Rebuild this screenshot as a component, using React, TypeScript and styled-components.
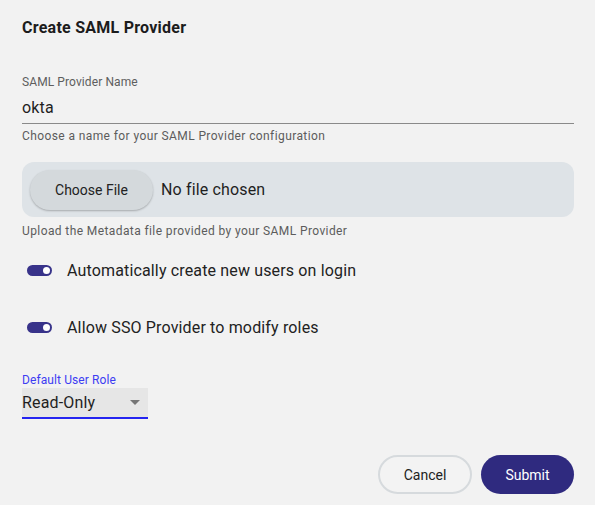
import styled, { createGlobalStyle } from "styled-components";

const GlobalStyle = createGlobalStyle`
    html, body {
        margin: 0;
        padding: 0;
        background: #f2f2f2;
        font-family: Roboto, "Liberation Sans", sans-serif;
        color: #1f1f1f;
    }`

const Page = styled.div`
    width: 595px;
    height: 505px;
    box-sizing: border-box;
    padding: 18px 21px 0 22px;
    display: flex;
    flex-direction: column;`

const Title = styled.h2`
    margin: 0;
    font-size: 16px;
    font-weight: 700;
    line-height: 20px;
    letter-spacing: 0.25px;
    color: #1c1c1c;`

const Field = styled.div`
    margin-top: 37px;
    display: flex;
    flex-direction: column;`

const Label = styled.label<{ $focused?: boolean }>`
    font-size: 12px;
    line-height: 14px;
    letter-spacing: 0.1px;
    color: ${p => p.$focused ? "#3d3df2" : "#5e5e5e"};`

const Input = styled.input`
    margin-top: 9px;
    padding: 0 0 5px;
    border: 0;
    border-bottom: 1px solid #8a8a8a;
    background: transparent;
    font-family: inherit;
    font-size: 16px;
    line-height: 20px;
    letter-spacing: 0.15px;
    color: #1f1f1f;
    outline: none;`

const Helper = styled.p<{ $gap?: number }>`
    margin: ${p => p.$gap ?? 5}px 0 0;
    font-size: 12px;
    line-height: 14px;
    letter-spacing: 0.4px;
    color: #5c5c5c;`

const FileBox = styled.div`
    margin-top: 19px;
    height: 55px;
    border-radius: 12px;
    background: #dee3e7;
    display: flex;
    align-items: center;
    padding: 0 8px;
    gap: 8px;`

const FileButton = styled.button`
    width: 123px;
    height: 40px;
    border: 0;
    border-radius: 20px;
    background: #d4d9dc;
    box-shadow: 0 1px 2px rgba(0,0,0,0.25);
    font-family: inherit;
    font-size: 14px;
    color: #222;`

const FileName = styled.span`
    font-size: 16px;
    letter-spacing: 0.15px;
    color: #1f1f1f;`

const ToggleRow = styled.div<{ $gap: number }>`
    margin-top: ${p => p.$gap}px;
    display: flex;
    align-items: center;
    gap: 15px;
    padding-left: 5px;
    height: 20px;`

const Track = styled.span`
    position: relative;
    width: 25px;
    height: 11px;
    border-radius: 6px;
    background: #38338a;

    &::after {
        content: "";
        position: absolute;
        right: 2px;
        top: 2px;
        width: 7px;
        height: 7px;
        border-radius: 50%;
        background: #fff;
    }`

const ToggleText = styled.span`
    font-size: 16px;
    letter-spacing: 0.15px;
    color: #222;`

const SelectField = styled.div`
    margin-top: 36px;
    display: flex;
    flex-direction: column;`

const Select = styled.div`
    margin-top: 1px;
    width: 126px;
    height: 31px;
    box-sizing: border-box;
    background: #e6e6e6;
    border-bottom: 2px solid #2424f0;
    display: flex;
    align-items: center;
    justify-content: space-between;
    padding: 0 8px 0 0;
    font-size: 16px;
    letter-spacing: 0.15px;
    color: #1f1f1f;`

const Caret = styled.span`
    width: 0;
    height: 0;
    border-left: 5px solid transparent;
    border-right: 5px solid transparent;
    border-top: 5px solid #757575;`

const Actions = styled.div`
    margin-top: 36px;
    display: flex;
    justify-content: flex-end;
    gap: 9px;`

const Button = styled.button<{ $primary?: boolean }>`
    height: 39px;
    width: ${p => p.$primary ? 93 : 94}px;
    border-radius: 20px;
    font-family: inherit;
    font-size: 14px;
    border: ${p => p.$primary ? "0" : "2px solid #d6dadd"};
    background: ${p => p.$primary ? "#2f2a7f" : "#f3f3f3"};
    color: ${p => p.$primary ? "#fff" : "#222"};`

export default function App() {
    return (
        <>
            <GlobalStyle />
            <Page>
                <Title>Create SAML Provider</Title>
                <Field>
                    <Label>SAML Provider Name</Label>
                    <Input defaultValue="okta" />
                    <Helper>Choose a name for your SAML Provider configuration</Helper>
                </Field>
                <FileBox>
                    <FileButton>Choose File</FileButton>
                    <FileName>No file chosen</FileName>
                </FileBox>
                <Helper $gap={7}>Upload the Metadata file provided by your SAML Provider</Helper>
                <ToggleRow $gap={22}>
                    <Track />
                    <ToggleText>Automatically create new users on login</ToggleText>
                </ToggleRow>
                <ToggleRow $gap={37}>
                    <Track />
                    <ToggleText>Allow SSO Provider to modify roles</ToggleText>
                </ToggleRow>
                <SelectField>
                    <Label $focused>Default User Role</Label>
                    <Select>
                        <span>Read-Only</span>
                        <Caret />
                    </Select>
                </SelectField>
                <Actions>
                    <Button>Cancel</Button>
                    <Button $primary>Submit</Button>
                </Actions>
            </Page>
        </>
    )
}
